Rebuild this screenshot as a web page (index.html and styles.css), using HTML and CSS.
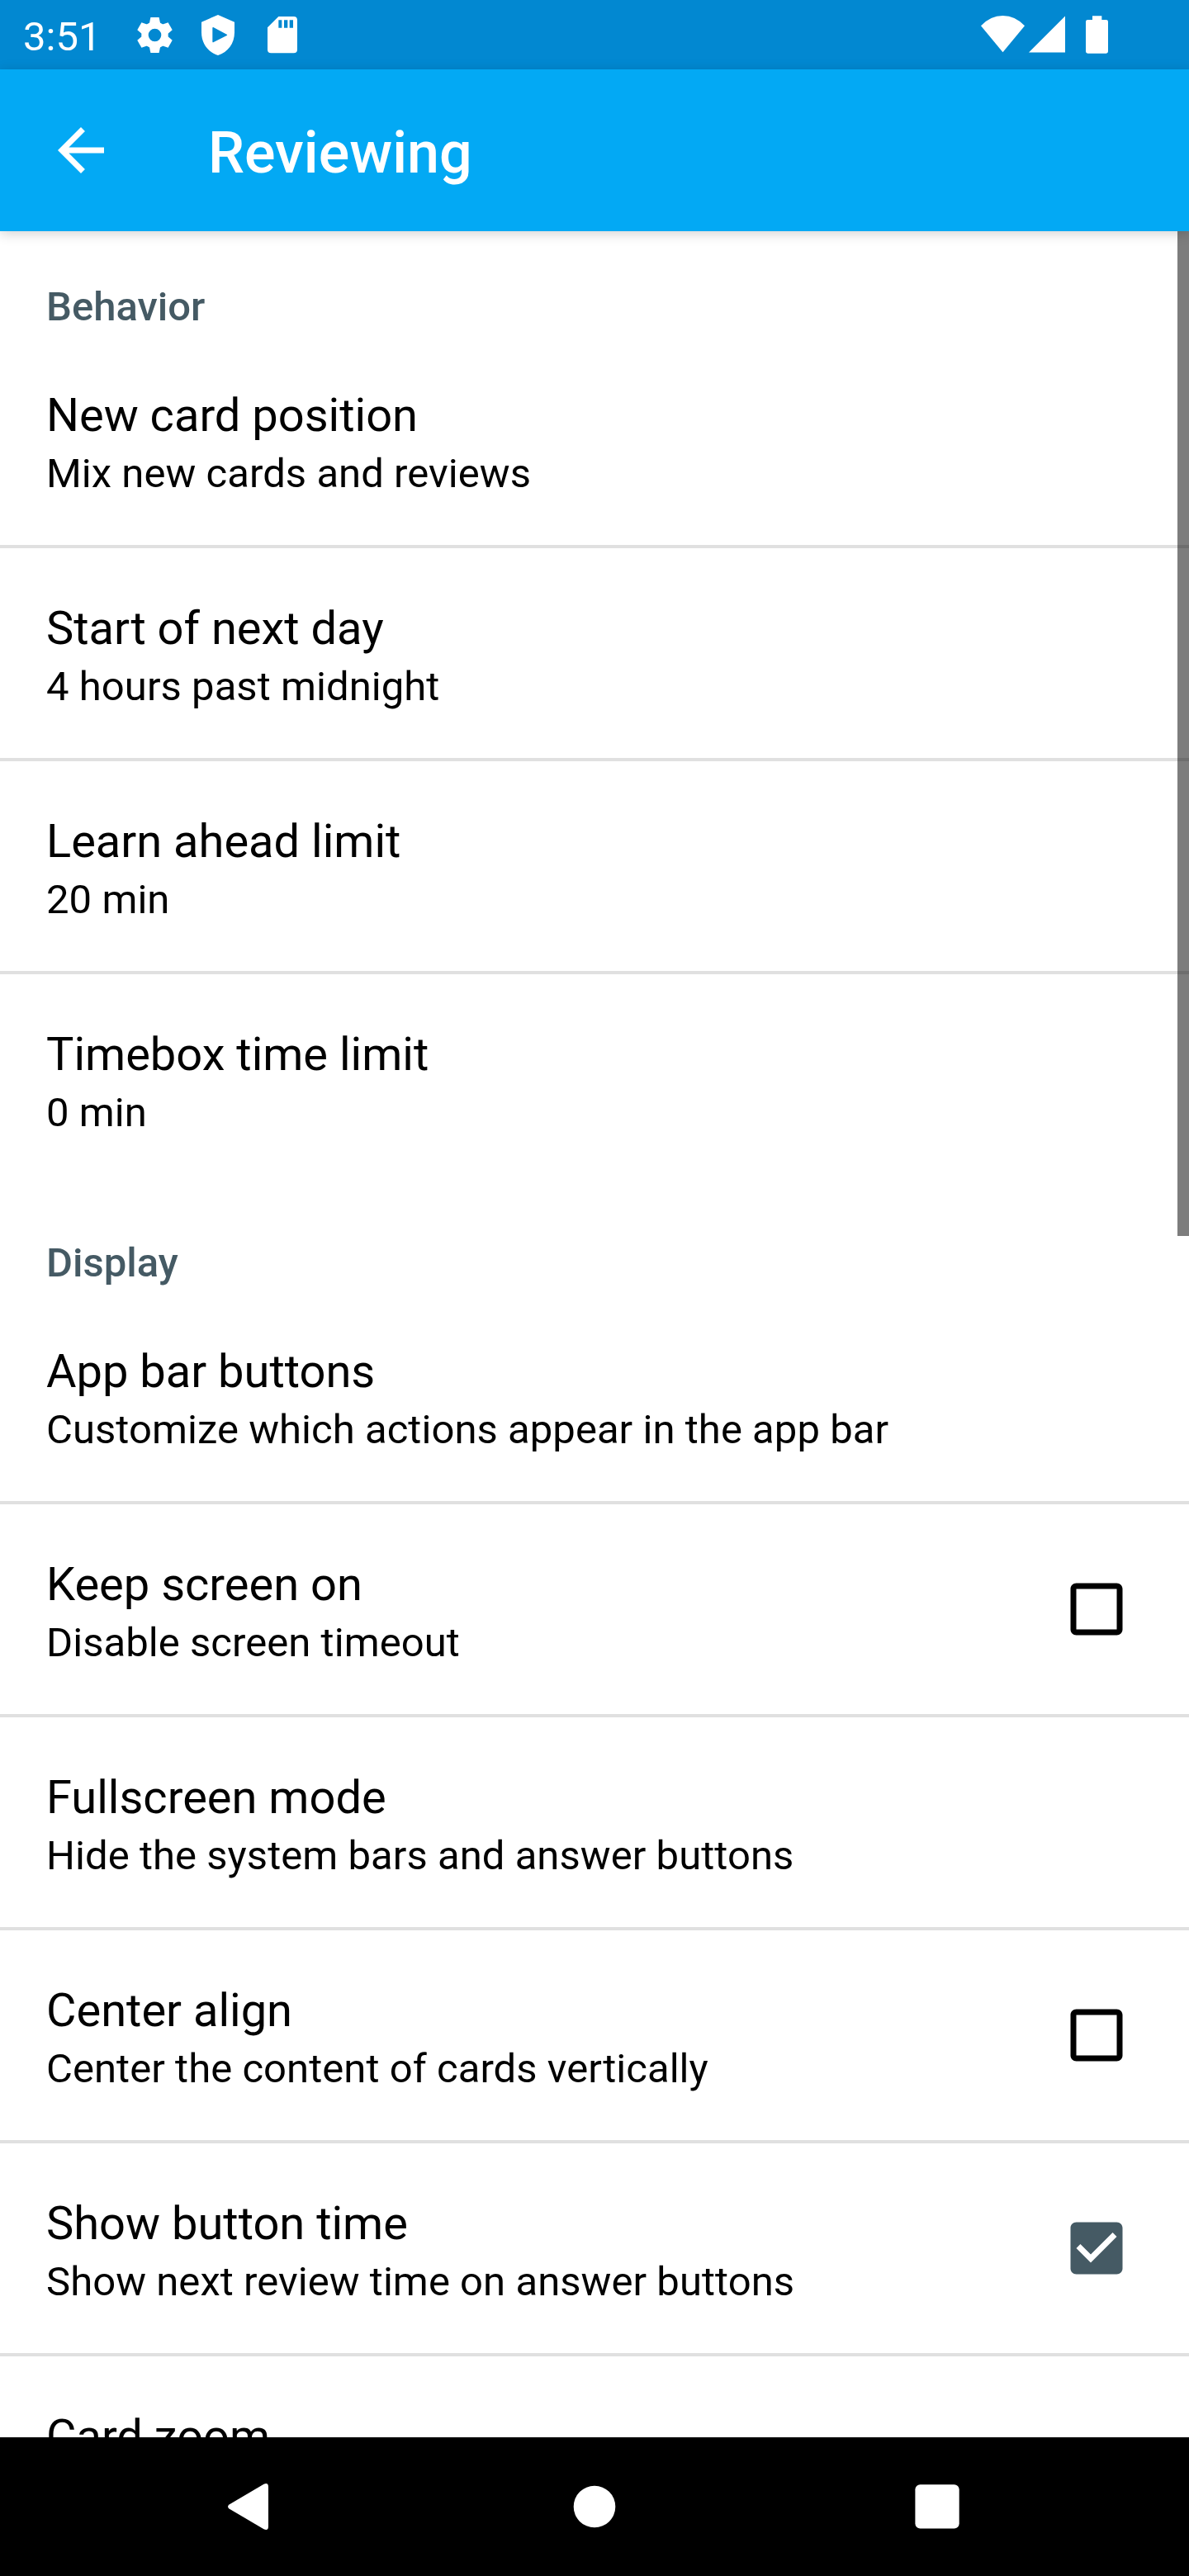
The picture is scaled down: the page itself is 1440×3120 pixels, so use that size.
FILE: index.html
```html
<!DOCTYPE html>
<html lang="en">
<head>
<meta charset="utf-8">
<title>Reviewing</title>
<link rel="stylesheet" href="styles.css">
</head>
<body>
<div class="screen">
  <div class="status-bar">
    <div class="clock">3:51</div>
    <svg class="icon-gear" viewBox="-80 -80 160 160">
      <circle r="49"/>
      <path id="teeth" d="M-20 -42L-15.500 -65H15.500L20 -42L20 42L15.500 65H-15.500L-20 42Z"/>
      <use href="#teeth" transform="rotate(60)"/>
      <use href="#teeth" transform="rotate(120)"/>
      <circle class="gear-hole" r="23.500"/>
    </svg>
    <svg class="icon-shield" viewBox="0 0 120 252"><path fill-rule="evenodd" d="M60 54L120 80V118C120 158 96 190 60 201C24 190 0 158 0 118V80ZM43 99Q40 98 40 102V151Q40 155 43 154L92 129Q95 127 92 125Z"/></svg>
    <svg class="icon-sd" viewBox="0 0 108 252"><path fill-rule="evenodd" d="M40 60H95Q108 60 108 73V180Q108 193 95 193H13Q0 193 0 180V100ZM40 73V101H52V73ZM60 73V101H73V73ZM80 73V101H93V73Z"/></svg>
    <div class="system-icons">
      <svg class="icon-wifi" viewBox="0 0 159 252"><path d="M79.500 190L0 94Q34 57 79.500 57Q125 57 159 94Z"/></svg>
      <svg class="icon-signal" viewBox="0 0 132 252"><path d="M0 190.500L132 58.500V190.500Z"/></svg>
      <svg class="icon-battery" viewBox="0 0 81 252"><path d="M24 58H58V72H74Q81 72 81 79V187Q81 194 74 194H7Q0 194 0 187V79Q0 72 7 72H24Z"/></svg>
    </div>
  </div>
  <header class="app-bar">
    <svg class="back" viewBox="0 0 24 24"><path d="M20 11H7.830l5.590-5.590L12 4l-8 8 8 8 1.410-1.410L7.830 13H20v-2z"/></svg>
    <h1 class="app-title">Reviewing</h1>
  </header>
  <main class="list">
    <h2 class="category">Behavior</h2>
    <div class="row"><div class="text"><div class="title">New card position</div><div class="summary">Mix new cards and reviews</div></div></div>
    <div class="row"><div class="text"><div class="title">Start of next day</div><div class="summary">4 hours past midnight</div></div></div>
    <div class="row"><div class="text"><div class="title">Learn ahead limit</div><div class="summary">20 min</div></div></div>
    <div class="row last"><div class="text"><div class="title">Timebox time limit</div><div class="summary">0 min</div></div></div>
    <h2 class="category">Display</h2>
    <div class="row"><div class="text"><div class="title">App bar buttons</div><div class="summary">Customize which actions appear in the app bar</div></div></div>
    <div class="row"><div class="text"><div class="title">Keep screen on</div><div class="summary">Disable screen timeout</div></div>
      <svg class="checkbox" viewBox="0 0 24 24"><path d="M19 5v14H5V5h14m0-2H5c-1.100 0-2 .9-2 2v14c0 1.100.9 2 2 2h14c1.100 0 2-.9 2-2V5c0-1.100-.9-2-2-2z"/></svg></div>
    <div class="row"><div class="text"><div class="title">Fullscreen mode</div><div class="summary">Hide the system bars and answer buttons</div></div></div>
    <div class="row"><div class="text"><div class="title">Center align</div><div class="summary">Center the content of cards vertically</div></div>
      <svg class="checkbox" viewBox="0 0 24 24"><path d="M19 5v14H5V5h14m0-2H5c-1.100 0-2 .9-2 2v14c0 1.100.9 2 2 2h14c1.100 0 2-.9 2-2V5c0-1.100-.9-2-2-2z"/></svg></div>
    <div class="row"><div class="text"><div class="title">Show button time</div><div class="summary">Show next review time on answer buttons</div></div>
      <svg class="checkbox checked" viewBox="0 0 24 24"><path d="M19 3H5c-1.110 0-2 .9-2 2v14c0 1.100.89 2 2 2h14c1.110 0 2-.9 2-2V5c0-1.100-.89-2-2-2zm-9 14l-5-5 1.410-1.410L10 14.170l7.590-7.590L19 8l-9 9z"/></svg></div>
    <div class="row"><div class="text"><div class="title">Card zoom</div></div></div>
    <div class="scrollbar"></div>
  </main>
  <nav class="nav-bar">
    <svg viewBox="0 0 84 84"><path d="M14.500 39.500L56.500 14.800Q62 12.500 62 18V66Q62 71.500 56.500 69.200L14.500 44.500Q11.500 42 14.500 39.500Z"/></svg>
    <svg viewBox="0 0 84 84"><circle cx="42" cy="42" r="25.300"/></svg>
    <svg viewBox="0 0 84 84"><rect x="15.400" y="15.200" width="53.300" height="53.300" rx="6"/></svg>
  </nav>
</div>
</body>
</html>
```
FILE: styles.css
```css
* { box-sizing: border-box; }
body { margin: 0; background: #fff; font-family: Roboto, "Liberation Sans", sans-serif; }
svg { display: block; flex: none; fill: #fff; }
.screen { width: 1440px; height: 3120px; display: flex; flex-direction: column; overflow: hidden; }

.status-bar { flex: none; height: 84px; display: flex; align-items: center; padding-left: 28px; background: #0288d1; color: #fff; }
.clock { width: 133px; font-size: 49px; line-height: 57px; padding-top: 5px; }
.icon-gear { width: 53px; height: 53px; }
.gear-hole { fill: #0288d1; }
.icon-shield { width: 40px; height: 84px; margin-left: 30.300px; }
.icon-sd { width: 36px; height: 84px; margin-left: 39.300px; }
.system-icons { display: flex; margin-left: auto; padding-right: 98px; }
.icon-wifi { width: 53px; height: 84px; }
.icon-signal { width: 44px; height: 84px; margin-left: 5px; }
.icon-battery { width: 27px; height: 84px; margin-left: 25px; }

.app-bar { flex: none; height: 196px; display: flex; align-items: center; padding-left: 56px; background: #03a9f4; color: #fff; position: relative; z-index: 1; box-shadow: 0 3px 14px rgba(0, 0, 0, .18); }
.back { width: 84px; height: 84px; }
.app-title { margin: 0 0 0 112px; font-size: 70px; font-weight: 500; line-height: 82px; padding-top: 6px; }

.list { flex: 1; min-height: 0; overflow: hidden; position: relative; }
.category { margin: 0; height: 126px; padding: 63px 56px 0; font-size: 49px; font-weight: 500; line-height: 57px; color: #455a64; }
.row { height: 258px; display: flex; align-items: center; padding: 0 70px 0 56px; border-bottom: 4px solid #e0e0e0; }
.row.last { border-bottom-color: transparent; }
.text { flex: 1; align-self: flex-start; padding-top: 64px; color: #000; }
.title { font-size: 56px; line-height: 66px; }
.summary { margin-top: 9px; font-size: 49px; line-height: 57px; letter-spacing: .05px; }
.checkbox { width: 84px; height: 84px; fill: #000; }
.checkbox.checked { fill: #455a64; }
.scrollbar { position: absolute; top: 0; right: 0; width: 14px; height: 1217px; background: rgba(0, 0, 0, .51); }

.nav-bar { flex: none; height: 168px; display: flex; align-items: center; justify-content: center; gap: 331px; background: #000; }
.nav-bar svg { width: 84px; height: 84px; }
```
